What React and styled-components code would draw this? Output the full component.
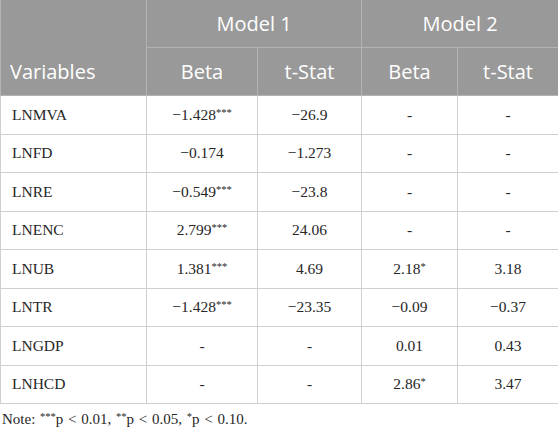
import React from "react";
import styled, { createGlobalStyle } from "styled-components";

const Global = createGlobalStyle`
  html, body { margin: 0; padding: 0; background: #ffffff; }
  body { width: 558px; height: 429px; overflow: hidden; }
`;

const Wrap = styled.div`
  width: 558px;
  display: flex;
  flex-direction: column;
`;

const Table = styled.table`
  width: 558px;
  border-collapse: collapse;
  table-layout: fixed;
`;

const HeadCell = styled.th`
  background: #999999;
  color: #ffffff;
  font-family: "Open Sans", "Noto Sans", sans-serif;
  font-weight: 400;
  font-size: 20px;
  height: 47px;
  padding: 0;
  text-align: ${(p) => (p.$left ? "left" : "center")};
  padding-left: ${(p) => (p.$left ? "9px" : "0")};
  vertical-align: ${(p) => (p.$bottom ? "bottom" : "middle")};
  padding-bottom: ${(p) => (p.$bottom ? "10px" : "0")};
  border: 1px solid #b3b3b3;
  border-top: none;
  &:first-child { border-left: 1px solid #b3b3b3; }
`;

const Cell = styled.td`
  font-family: "Liberation Serif", "Times New Roman", serif;
  font-size: 15.5px;
  color: #262626;
  height: 37.5px;
  padding: 0;
  padding-left: ${(p) => (p.$left ? "11px" : "0")};
  text-align: ${(p) => (p.$left ? "left" : "center")};
  border: 1px solid #cfcfcf;
`;

const Sup = styled.sup`
  font-size: 10.5px;
  vertical-align: 4px;
  line-height: 0;
`;

const Note = styled.div`
  font-family: "Liberation Serif", "Times New Roman", serif;
  font-size: 15px;
  color: #262626;
  padding: 7px 0 0 2px;
  word-spacing: 1px;
`;

const rows = [
  ["LNMVA", ["\u22121.428", "***"], ["\u221226.9"], ["-"], ["-"]],
  ["LNFD", ["\u22120.174"], ["\u22121.273"], ["-"], ["-"]],
  ["LNRE", ["\u22120.549", "***"], ["\u221223.8"], ["-"], ["-"]],
  ["LNENC", ["2.799", "***"], ["24.06"], ["-"], ["-"]],
  ["LNUB", ["1.381", "***"], ["4.69"], ["2.18", "*"], ["3.18"]],
  ["LNTR", ["\u22121.428", "***"], ["\u221223.35"], ["\u22120.09"], ["\u22120.37"]],
  ["LNGDP", ["-"], ["-"], ["0.01"], ["0.43"]],
  ["LNHCD", ["-"], ["-"], ["2.86", "*"], ["3.47"]],
];

const widths = [146, 111, 104, 96, 101];

export default function App() {
  return (
    <Wrap>
      <Global />
      <Table>
        <colgroup>
          {widths.map((w, i) => (
            <col key={i} style={{ width: w }} />
          ))}
        </colgroup>
        <thead>
          <tr>
            <HeadCell rowSpan={2} $left $bottom>
              Variables
            </HeadCell>
            <HeadCell colSpan={2}>Model 1</HeadCell>
            <HeadCell colSpan={2}>Model 2</HeadCell>
          </tr>
          <tr>
            <HeadCell>Beta</HeadCell>
            <HeadCell>t-Stat</HeadCell>
            <HeadCell>Beta</HeadCell>
            <HeadCell>t-Stat</HeadCell>
          </tr>
        </thead>
        <tbody>
          {rows.map((r) => (
            <tr key={r[0]}>
              <Cell $left>{r[0]}</Cell>
              {r.slice(1).map((c, i) => (
                <Cell key={i}>
                  {c[0]}
                  {c[1] && <Sup>{c[1]}</Sup>}
                </Cell>
              ))}
            </tr>
          ))}
        </tbody>
      </Table>
      <Note>
        Note: <Sup>***</Sup>p &lt; 0.01, <Sup>**</Sup>p &lt; 0.05, <Sup>*</Sup>p &lt; 0.10.
      </Note>
    </Wrap>
  );
}
